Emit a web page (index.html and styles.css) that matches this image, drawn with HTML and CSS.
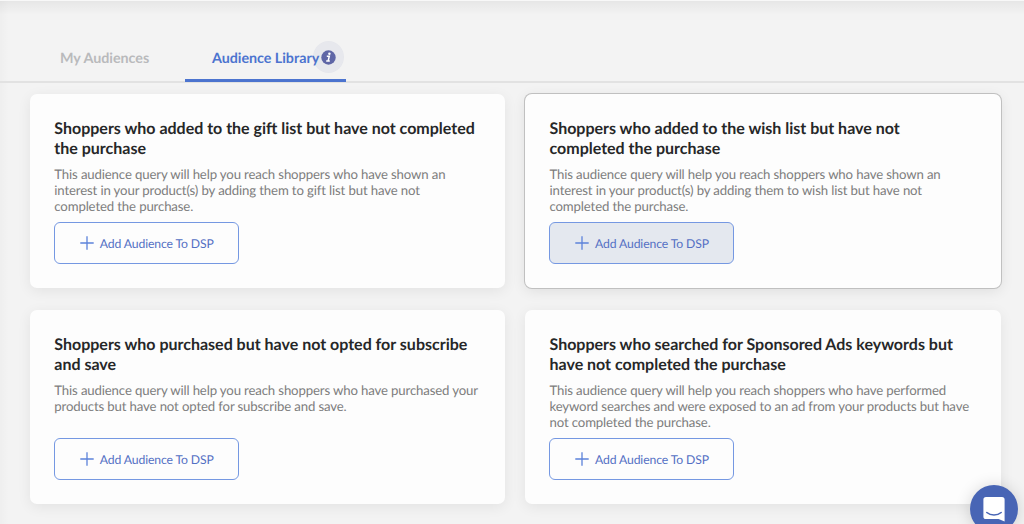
FILE: index.html
```html
<!DOCTYPE html>
<html lang="en">
<head>
<meta charset="utf-8">
<title>Audience Library</title>
<link rel="stylesheet" href="styles.css">
</head>
<body>
<main class="page">
  <nav class="tabs">
    <a class="tab">My Audiences</a>
    <a class="tab tab-active">Audience Library<span class="info"><svg width="15" height="15" viewBox="0 0 15 15"><circle cx="7.5" cy="7.5" r="7.2" fill="#5f66a6"/><circle cx="8.400" cy="3.700" r="1.250" fill="#fff"/><path d="M5.800 6.300h2.500L7.100 11h1.700M5.200 11h2.300" fill="none" stroke="#fff" stroke-width="1.500"/></svg></span></a>
  </nav>
  <section class="grid">
    <article class="card">
      <h2 class="title">Shoppers who added to the gift list but have not completed<br>the purchase</h2>
      <p class="desc">This audience query will help you reach shoppers who have shown an<br>interest in your product(s) by adding them to gift list but have not<br>completed the purchase.</p>
      <button class="add"><svg class="plus" width="14" height="14" viewBox="0 0 14 14"><path d="M7 .3v13.4M.3 7h13.4"/></svg>Add Audience To DSP</button>
    </article>
    <article class="card card-hover">
      <h2 class="title">Shoppers who added to the wish list but have not<br>completed the purchase</h2>
      <p class="desc">This audience query will help you reach shoppers who have shown an<br>interest in your product(s) by adding them to wish list but have not<br>completed the purchase.</p>
      <button class="add add-hover"><svg class="plus" width="14" height="14" viewBox="0 0 14 14"><path d="M7 .3v13.4M.3 7h13.4"/></svg>Add Audience To DSP</button>
    </article>
    <article class="card">
      <h2 class="title">Shoppers who purchased but have not opted for subscribe<br>and save</h2>
      <p class="desc">This audience query will help you reach shoppers who have purchased your<br>products but have not opted for subscribe and save.</p>
      <button class="add"><svg class="plus" width="14" height="14" viewBox="0 0 14 14"><path d="M7 .3v13.4M.3 7h13.4"/></svg>Add Audience To DSP</button>
    </article>
    <article class="card">
      <h2 class="title">Shoppers who searched for Sponsored Ads keywords but<br>have not completed the purchase</h2>
      <p class="desc">This audience query will help you reach shoppers who have performed<br>keyword searches and were exposed to an ad from your products but have<br>not completed the purchase.</p>
      <button class="add"><svg class="plus" width="14" height="14" viewBox="0 0 14 14"><path d="M7 .3v13.4M.3 7h13.4"/></svg>Add Audience To DSP</button>
    </article>
  </section>
  <div class="chat"><svg width="22" height="26" viewBox="0 0 22 26"><path d="M3 0h16a2.600 2.600 0 0 1 2.600 2.600V24.500l-6-2.500H3A2.600 2.600 0 0 1 .4 19.400V2.600A2.600 2.600 0 0 1 3 0z" fill="#fff"/><path d="M3.800 15.500c4 3.400 10.400 3.400 14.400 0" fill="none" stroke="#4865b5" stroke-width="1.500" stroke-linecap="round"/></svg></div>
</main>
</body>
</html>
```

FILE: styles.css
```css
* { box-sizing: border-box; }
body {
  margin: 0;
  font-family: Lato, "Liberation Sans", sans-serif;
  text-rendering: geometricPrecision;
}
.page {
  position: relative;
  height: 524px;
  overflow: hidden;
  background:
    linear-gradient(rgba(0,0,0,.05), transparent 14px),
    linear-gradient(90deg, rgba(0,0,0,.02), transparent 9px),
    #f3f3f3;
  border-top: 1px solid #f8f8f8;
}
.tabs {
  display: flex;
  height: 82px;
  padding: 34px 0 0 36px;
  border-bottom: 2px solid #e2e2e2;
}
.tab {
  width: 137px;
  height: 46.500px;
  padding: 0 24px;
  font-size: 14.300px;
  font-weight: 700;
  line-height: 48px;
  letter-spacing: -.03px;
  color: #b9babc;
  white-space: nowrap;
}
.tab-active {
  position: relative;
  width: 161px;
  margin-left: 12px;
  padding: 0 0 0 27px;
  color: #4c74cf;
  border-bottom: 3px solid #4c74cf;
}
.info {
  position: absolute;
  left: 128px;
  top: 6px;
  display: flex;
  align-items: center;
  justify-content: center;
  width: 31px;
  height: 32px;
  border-radius: 50%;
  background: rgba(95,102,166,.08);
}
.grid {
  display: grid;
  grid-template-columns: 475.600px 475.600px;
  grid-auto-rows: 194px;
  gap: 22px 19.600px;
  padding: 11px 0 0 29.800px;
}
.card {
  display: flex;
  flex-direction: column;
  align-items: flex-start;
  padding: 24.800px 24.500px 24px;
  border-radius: 7px;
  background: #fdfdfd;
  box-shadow: 0 3px 14px rgba(0,0,0,.07);
}
.card-hover { box-shadow: 0 0 0 1px #c0c0c0, 0 3px 14px rgba(0,0,0,.09); }
.title {
  margin: 0;
  font-size: 16px;
  line-height: 19.800px;
  font-weight: 700;
  color: #262728;
  white-space: nowrap;
}
.desc {
  margin: 7.600px 0 0;
  font-size: 13.200px;
  letter-spacing: -.138px;
  line-height: 16.200px;
  color: #7c7c7c;
  white-space: nowrap;
}
.add {
  display: flex;
  align-items: center;
  gap: 6px;
  width: 184.600px;
  height: 42px;
  margin-top: auto;
  padding: 0 0 0 24.500px;
  border: 1.500px solid #7598e2;
  border-radius: 6px;
  background: #fdfdfd;
  font: 400 12.200px Lato, "Liberation Sans", sans-serif;
  letter-spacing: -.12px;
  text-rendering: geometricPrecision;
  color: #5470c4;
  white-space: nowrap;
}
.add-hover { background: #e4e8ef; }
.plus { fill: none; stroke: #5c83da; stroke-width: 1.300; }
.chat {
  position: absolute;
  left: 970px;
  top: 484px;
  display: flex;
  justify-content: center;
  width: 48px;
  height: 48px;
  padding-top: 12px;
  border-radius: 50%;
  background: #4865b5;
  box-shadow: 0 1px 16px rgba(0,0,0,.16);
}
```
